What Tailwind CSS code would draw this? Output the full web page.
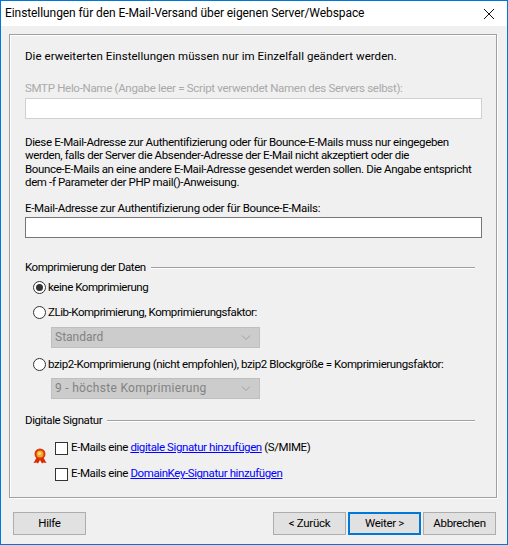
<!DOCTYPE html>
<html lang="de">
<head>
  <meta charset="UTF-8">
  <title>Einstellungen</title>
  <script src="https://cdn.jsdelivr.net/npm/@tailwindcss/browser@4"></script>
</head>
<body class="bg-[#f0f0f0]">
  <div class="w-[508px] h-[545px] flex flex-col border border-[#0078d7] font-['Roboto',sans-serif] text-[11.5px] leading-[13.4px] tracking-[-0.3px] text-black overflow-hidden whitespace-nowrap">
    <!-- Title bar -->
    <div class="h-[25px] shrink-0 bg-white flex items-center justify-between pl-1 pr-[12px]">
      <span class="text-[12px] tracking-[-0.08px] text-black">Einstellungen für den E-Mail-Versand über eigenen Server/Webspace</span>
      <svg width="12" height="12" viewBox="0 0 12 12" fill="none" stroke="#111" stroke-width="1"><path d="M1 1l10 10M11 1L1 11"/></svg>
    </div>

    <!-- Main panel -->
    <div class="mt-[8px] ml-[8px] mr-[10px] h-[464px] shrink-0 border border-[#a0a0a0] shadow-[1px_1px_0_#fff,inset_1px_1px_0_#fff] pl-[15px] pr-[14px]">
      <p class="mt-[15px] tracking-[0.05px]">Die erweiterten Einstellungen müssen nur im Einzelfall geändert werden.</p>
      <p class="mt-[19px] text-[#a9a9a9]">SMTP Helo-Name (Angabe leer = Script verwendet Namen des Servers selbst):</p>
      <div class="mt-[2px] h-[21px] bg-white border border-[#d0d0d0]"></div>

      <p class="mt-[17px] tracking-[-0.36px]">Diese E-Mail-Adresse zur Authentifizierung oder für Bounce-E-Mails muss nur eingegeben<br>werden, falls der Server die Absender-Adresse der E-Mail nicht akzeptiert oder die<br>Bounce-E-Mails an eine andere E-Mail-Adresse gesendet werden sollen. Die Angabe entspricht<br>dem -f Parameter der PHP mail()-Anweisung.</p>
      <p class="mt-[13px]">E-Mail-Adresse zur Authentifizierung oder für Bounce-E-Mails:</p>
      <div class="mt-[1px] h-[21px] bg-white border border-[#767676]"></div>

      <!-- Kompression -->
      <div class="mt-[23px] flex items-center gap-[5px] mr-[7px] tracking-[-0.45px]">
        <span>Komprimierung der Daten</span>
        <div class="flex-1 h-[2px] border-y border-t-[#a0a0a0] border-b-white"></div>
      </div>
      <div class="mt-[7px] ml-[8px] h-[13px] flex items-center gap-[2px] tracking-[-0.45px]">
        <span class="w-[13px] h-[13px] shrink-0 rounded-full border border-[#333] bg-white flex items-center justify-center"><span class="w-[7px] h-[7px] rounded-full bg-[#333]"></span></span>
        <span>keine Komprimierung</span>
      </div>
      <div class="mt-[12px] ml-[8px] h-[13px] flex items-center gap-[2px] tracking-[-0.45px]">
        <span class="w-[13px] h-[13px] shrink-0 rounded-full border border-[#333] bg-white"></span>
        <span>ZLib-Komprimierung, Komprimierungsfaktor:</span>
      </div>
      <div class="mt-[8px] ml-[26px] w-[209px] h-[21px] bg-[#cccccc] border border-[#bfbfbf] flex items-center justify-between pl-[3px] pr-[8px] text-[12px] tracking-normal text-[#838383]">
        <span>Standard</span>
        <svg width="10" height="6" viewBox="0 0 10 6" fill="none" stroke="#a0a0a0"><path d="M1 .5l4 4 4-4"/></svg>
      </div>
      <div class="mt-[10px] ml-[8px] h-[13px] flex items-center gap-[2px] tracking-[-0.4px]">
        <span class="w-[13px] h-[13px] shrink-0 rounded-full border border-[#333] bg-white"></span>
        <span>bzip2-Komprimierung (nicht empfohlen), bzip2 Blockgröße = Komprimierungsfaktor:</span>
      </div>
      <div class="mt-[7px] ml-[26px] w-[209px] h-[21px] bg-[#cccccc] border border-[#bfbfbf] flex items-center justify-between pl-[3px] pr-[8px] text-[12px] tracking-[0.3px] text-[#838383]">
        <span>9 - höchste Komprimierung</span>
        <svg width="10" height="6" viewBox="0 0 10 6" fill="none" stroke="#a0a0a0"><path d="M1 .5l4 4 4-4"/></svg>
      </div>

      <!-- Signatur -->
      <div class="mt-[15px] flex items-center gap-[5px] mr-[7px] tracking-[-0.4px]">
        <span>Digitale Signatur</span>
        <div class="flex-1 h-[2px] border-y border-t-[#a0a0a0] border-b-white"></div>
      </div>
      <div class="mt-[14px] flex items-start tracking-[-0.4px]">
        <svg class="ml-[8px] mr-[8px] mt-[6px]" width="14" height="16" viewBox="0 0 14 16">
          <path d="M4 9L0.5 15l3-.5 1.5 1L7 12l2 3.500 1.500-1 3 .5L10 9z" fill="#d92a00"/>
          <circle cx="7" cy="6" r="5.500" fill="#d83a08"/>
          <circle cx="7" cy="6" r="3.500" fill="#f5a623"/>
          <circle cx="6.500" cy="5.500" r="1.800" fill="#fbd77a"/>
        </svg>
        <div class="flex flex-col gap-[13px]">
          <div class="h-[13px] flex items-center gap-[3px]">
            <span class="w-[13px] h-[13px] shrink-0 bg-white border border-[#333]"></span>
            <span>E-Mails eine <a href="#" class="text-[#0000ff] underline">digitale Signatur hinzufügen</a> (S/MIME)</span>
          </div>
          <div class="h-[13px] flex items-center gap-[3px]">
            <span class="w-[13px] h-[13px] shrink-0 bg-white border border-[#333]"></span>
            <span>E-Mails eine <a href="#" class="text-[#0000ff] underline">DomainKey-Signatur hinzufügen</a></span>
          </div>
        </div>
      </div>
    </div>

    <!-- Buttons -->
    <div class="mt-[14px] pl-[12px] pr-[11px] flex">
      <button class="w-[73px] h-[23px] bg-[#e1e1e1] border border-[#adadad]">Hilfe</button>
      <button class="ml-auto w-[73px] h-[23px] bg-[#e1e1e1] border border-[#adadad]">&lt; Zurück</button>
      <button class="ml-[2px] w-[73px] h-[23px] bg-[#e1e1e1] border-2 border-[#0078d7]">Weiter &gt;</button>
      <button class="ml-[2px] w-[73px] h-[23px] bg-[#e1e1e1] border border-[#adadad]">Abbrechen</button>
    </div>
  </div>
</body>
</html>
